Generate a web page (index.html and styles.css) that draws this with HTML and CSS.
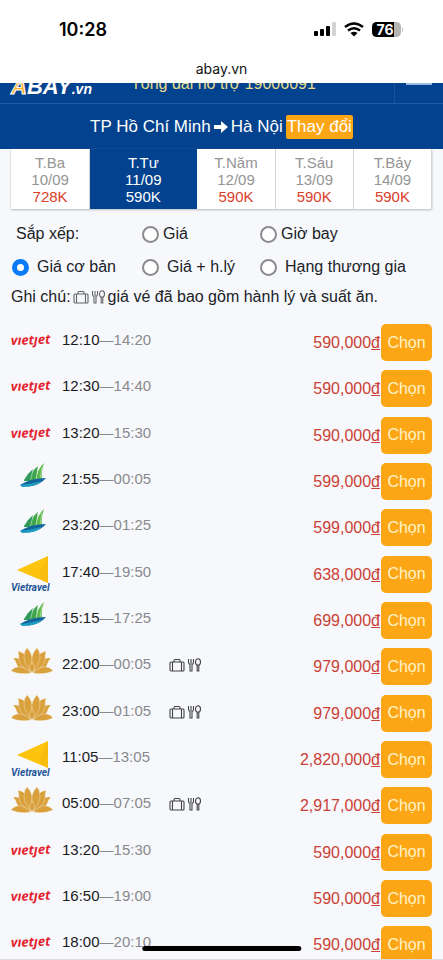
FILE: index.html
```html
<!DOCTYPE html>
<html lang="vi">
<head>
<meta charset="utf-8">
<meta name="viewport" content="width=device-width, initial-scale=1">
<title>abay.vn</title>
<link rel="stylesheet" href="styles.css">
</head>
<body>
<svg class="defs" aria-hidden="true">
  <symbol id="vietjet" viewBox="0 0 42 26" overflow="visible">
    <text class="vj" x="0" y="21" transform="rotate(-2 0 21)">vıetȷet</text>
  </symbol>
  <symbol id="bamboo" viewBox="0 0 42 26">
    <path d="M13 17Q17 10 22 6L20 18H13Z" fill="#2f9a57"/>
    <path d="M19 18Q20 8 27 3L25 18Z" fill="#3fa54c"/>
    <path d="M25 18Q26 6 33 0Q30 8 31 17Z" fill="#5cb848"/>
    <path d="M19.500 17L22 7M25 17L27 4M29 16L31 4" stroke="#e4f3e4" stroke-width=".5"/>
    <path d="M9 22Q20 15 35 15Q30 21 21 23Q13 24 9 22Z" fill="#12649c"/>
    <path d="M9 22Q19 21 31 18Q25 24 11 24Z" fill="#1f9dc0"/>
  </symbol>
  <symbol id="vietravel" viewBox="0 0 42 37" overflow="visible">
    <path d="M6 14L37 0V27Z" fill="#fcc40d"/>
    <path d="M29 16L37 0V27L29 22Z" fill="#f7bc0c"/>
    <text class="vt" x="0" y="35">Vietravel</text>
  </symbol>
  <symbol id="lotus" viewBox="0 0 42 26">
    <g fill="#d9a03c" stroke="#f8efdc" stroke-width=".4">
      <path d="M2 10Q12 9 17 17L20 25Q8 23 6 17Q5 13 2 10Z"/>
      <path d="M40 10Q30 9 25 17L22 25Q34 23 36 17Q37 13 40 10Z"/>
      <path d="M7 3Q17 6 19 14L20 24Q9 19 8 12Q8 7 7 3Z"/>
      <path d="M35 3Q25 6 23 14L22 24Q33 19 34 12Q34 7 35 3Z"/>
      <path d="M16 0Q22 6 21 13L20 23Q13 16 13 9Q13 3 16 0Z"/>
      <path d="M26 0Q20 6 21 13L22 23Q29 16 29 9Q29 3 26 0Z"/>
      <path d="M0 23Q4 18 11 19Q16 21 20 25Q8 27 0 23Z"/>
      <path d="M42 23Q38 18 31 19Q26 21 22 25Q34 27 42 23Z"/>
      <path d="M21 14Q26 20 21 25Q16 20 21 14Z"/>
    </g>
  </symbol>
  <symbol id="extras" viewBox="0 0 33 14">
    <g fill="none" stroke="currentColor" stroke-width="1.1">
      <rect x="1" y="4" width="14" height="9" rx="1"/>
      <path d="M5 4V2.500Q5 1.500 6 1.500H10Q11 1.500 11 2.500V4M3.500 4V13M12.500 4V13"/>
      <path d="M19.500 1V4Q19.500 6 21 6.500V13H23V6.500Q24.500 6 24.500 4V1M22 1V6"/>
      <ellipse cx="29" cy="4" rx="2.500" ry="3.200"/>
      <path d="M28.200 7V13H29.800V7"/>
    </g>
  </symbol>
</svg>

<div class="screen">
  <header class="status">
    <span class="clock">10:28</span>
    <svg class="signals" width="90" height="18" viewBox="0 0 90 18" role="img" aria-label="Pin 76%">
      <rect x="1" y="10" width="4" height="5" rx="1"/>
      <rect x="7" y="8" width="4" height="7" rx="1"/>
      <rect x="13" y="5" width="4" height="10" rx="1"/>
      <rect x="19" y="1" width="4" height="14" rx="1" fill="#d3d3d3"/>
      <g fill="none" stroke="#000" stroke-width="2.600">
        <path d="M32 6Q41 -1 50 6"/>
        <path d="M35 9.500Q41 5 47 9.500"/>
      </g>
      <path d="M37.500 12Q41 9.500 44.500 12L41 15.500Z"/>
      <path d="M64 1H82V16H64Q59 16 59 11V6Q59 1 64 1Z"/>
      <path d="M81 1H83Q88 1 88 6V11Q88 16 83 16H81Z" fill="#b5b5b5"/>
      <path d="M89 6Q91 8.500 89 11Z" fill="#b5b5b5"/>
      <text class="battery" x="72" y="14" text-anchor="middle">76</text>
    </svg>
  </header>
  <div class="address">abay.vn</div>

  <div class="topbar">
    <a class="brand" href="#"><span class="brand-a">A</span>BAY<small>.vn</small></a>
    <a class="hotline" href="#">Tổng đài hỗ trợ 19006091</a>
    <button class="menu" type="button" aria-label="Menu"><span></span></button>
  </div>

  <div class="route">
    <span>TP Hồ Chí Minh</span>
    <svg width="14" height="12" viewBox="0 0 14 12" aria-hidden="true"><path d="M0 4H7V0L14 6L7 12V8H0Z" fill="#fff"/></svg>
    <span>Hà Nội</span>
    <a class="change" href="#">Thay đổi</a>
  </div>

  <nav class="days">
    <a href="#">T.Ba<br>10/09<b>728K</b></a>
    <a class="active" href="#">T.Tư<br>11/09<b>590K</b></a>
    <a href="#">T.Năm<br>12/09<b>590K</b></a>
    <a href="#">T.Sáu<br>13/09<b>590K</b></a>
    <a href="#">T.Bảy<br>14/09<b>590K</b></a>
  </nav>

  <form class="options">
    <span class="caption">Sắp xếp:</span>
    <label class="tight"><input type="radio" name="sort">Giá</label>
    <label class="tight"><input type="radio" name="sort">Giờ bay</label>
    <label><input type="radio" name="fare" checked>Giá cơ bản</label>
    <label><input type="radio" name="fare">Giá + h.lý</label>
    <label><input type="radio" name="fare">Hạng thương gia</label>
  </form>
  <p class="note"><span>Ghi chú:</span><svg width="33" height="14"><use href="#extras"/></svg><span>giá vé đã bao gồm hành lý và suất ăn.</span></p>

  <table class="flights">
    <colgroup><col class="c-logo"><col class="c-time"><col class="c-extra"><col><col class="c-pick"></colgroup>
    <tbody>
      <tr><td><svg class="logo" role="img" aria-label="Vietjet"><use href="#vietjet"/></svg></td><td class="time">12:10<i>—</i><span>14:20</span></td><td></td><td class="price">590,000<u>đ</u></td><td><button type="button">Chọn</button></td></tr>
      <tr><td><svg class="logo" role="img" aria-label="Vietjet"><use href="#vietjet"/></svg></td><td class="time">12:30<i>—</i><span>14:40</span></td><td></td><td class="price">590,000<u>đ</u></td><td><button type="button">Chọn</button></td></tr>
      <tr><td><svg class="logo" role="img" aria-label="Vietjet"><use href="#vietjet"/></svg></td><td class="time">13:20<i>—</i><span>15:30</span></td><td></td><td class="price">590,000<u>đ</u></td><td><button type="button">Chọn</button></td></tr>
      <tr><td><svg class="logo" role="img" aria-label="Bamboo"><use href="#bamboo"/></svg></td><td class="time">21:55<i>—</i><span>00:05</span></td><td></td><td class="price">599,000<u>đ</u></td><td><button type="button">Chọn</button></td></tr>
      <tr><td><svg class="logo" role="img" aria-label="Bamboo"><use href="#bamboo"/></svg></td><td class="time">23:20<i>—</i><span>01:25</span></td><td></td><td class="price">599,000<u>đ</u></td><td><button type="button">Chọn</button></td></tr>
      <tr><td><svg class="logo tall" role="img" aria-label="Vietravel"><use href="#vietravel"/></svg></td><td class="time">17:40<i>—</i><span>19:50</span></td><td></td><td class="price">638,000<u>đ</u></td><td><button type="button">Chọn</button></td></tr>
      <tr><td><svg class="logo" role="img" aria-label="Bamboo"><use href="#bamboo"/></svg></td><td class="time">15:15<i>—</i><span>17:25</span></td><td></td><td class="price">699,000<u>đ</u></td><td><button type="button">Chọn</button></td></tr>
      <tr><td><svg class="logo" role="img" aria-label="Vietnam Airlines"><use href="#lotus"/></svg></td><td class="time">22:00<i>—</i><span>00:05</span></td><td class="extra"><svg width="33" height="14"><use href="#extras"/></svg></td><td class="price">979,000<u>đ</u></td><td><button type="button">Chọn</button></td></tr>
      <tr><td><svg class="logo" role="img" aria-label="Vietnam Airlines"><use href="#lotus"/></svg></td><td class="time">23:00<i>—</i><span>01:05</span></td><td class="extra"><svg width="33" height="14"><use href="#extras"/></svg></td><td class="price">979,000<u>đ</u></td><td><button type="button">Chọn</button></td></tr>
      <tr><td><svg class="logo tall" role="img" aria-label="Vietravel"><use href="#vietravel"/></svg></td><td class="time">11:05<i>—</i><span>13:05</span></td><td></td><td class="price">2,820,000<u>đ</u></td><td><button type="button">Chọn</button></td></tr>
      <tr><td><svg class="logo" role="img" aria-label="Vietnam Airlines"><use href="#lotus"/></svg></td><td class="time">05:00<i>—</i><span>07:05</span></td><td class="extra"><svg width="33" height="14"><use href="#extras"/></svg></td><td class="price">2,917,000<u>đ</u></td><td><button type="button">Chọn</button></td></tr>
      <tr><td><svg class="logo" role="img" aria-label="Vietjet"><use href="#vietjet"/></svg></td><td class="time">13:20<i>—</i><span>15:30</span></td><td></td><td class="price">590,000<u>đ</u></td><td><button type="button">Chọn</button></td></tr>
      <tr><td><svg class="logo" role="img" aria-label="Vietjet"><use href="#vietjet"/></svg></td><td class="time">16:50<i>—</i><span>19:00</span></td><td></td><td class="price">590,000<u>đ</u></td><td><button type="button">Chọn</button></td></tr>
      <tr><td><svg class="logo" role="img" aria-label="Vietjet"><use href="#vietjet"/></svg></td><td class="time">18:00<i>—</i><span>20:10</span></td><td></td><td class="price">590,000<u>đ</u></td><td><button type="button">Chọn</button></td></tr>
    </tbody>
  </table>
  <div class="home-bar"></div>
</div>
</body>
</html>
```
FILE: styles.css
```css
* { box-sizing: border-box; }

body {
  margin: 0;
  background: #f6f8fc;
  color: #202226;
  font: 16px/18px "Liberation Sans", Arial, sans-serif;
}

a { color: inherit; text-decoration: none; }

.defs { position: absolute; width: 0; height: 0; }

.screen {
  position: relative;
  height: 100vh;
  overflow: hidden;
  border-bottom: 1px solid #dcd9df;
}

/* Phone status area */
.status {
  display: flex;
  justify-content: space-between;
  align-items: center;
  height: 60px;
  padding: 0 40px 0 59px;
  background: #fff;
}

.clock { font: 600 18px/20px Inter, sans-serif; color: #000; }
.signals { overflow: visible; }
.battery { font: 700 14px Inter, sans-serif; fill: #fff; }

.address {
  height: 23px;
  background: #fff;
  color: #111;
  font: 14px/18px Inter, sans-serif;
  text-align: center;
}

/* Site header, scrolled under the address bar */
.topbar {
  display: flex;
  align-items: flex-end;
  height: 21px;
  padding: 0 11px;
  overflow: hidden;
  background: #03428e;
  border-bottom: 1px solid #2259a0;
}

.brand {
  width: 120px;
  padding-bottom: 4px;
  color: #fff;
  font: italic 700 22px/20px "Liberation Sans", sans-serif;
}
.brand small { font-size: 14px; }
.brand-a { color: #fdb02c; -webkit-text-stroke: 1px #fff; }

.hotline { flex: 1; padding-bottom: 10px; color: #e6dc8c; white-space: nowrap; }

.menu {
  align-self: stretch;
  display: flex;
  align-items: flex-start;
  padding: 0 0 0 11px;
  border: 0;
  border-left: 1px solid #1c509a;
  background: none;
}
.menu span { width: 26px; height: 2px; background: #9db9dd; }

.route {
  display: flex;
  justify-content: center;
  align-items: center;
  gap: 3px;
  height: 45px;
  background: #03428e;
  color: #fff;
  font-size: 17px;
}

.change {
  padding: 3px 1px;
  border-radius: 2px;
  background: #fca616;
}

/* Day tabs */
.days {
  display: grid;
  grid-template-columns: 79fr 107fr 78fr 78fr 78fr;
  margin: 0 11px;
  background: #fff;
  box-shadow: 0 1px 2px #bbb;
}
.days a {
  padding: 5px 0 4px;
  border-right: 1px solid #d5d5d8;
  color: #949494;
  font-size: 15px;
  line-height: 17px;
  text-align: center;
}
.days b { display: block; color: #d9402c; font-weight: 400; }
.days .active, .days .active b { border-color: #03428e; background: #03428e; color: #fff; }

/* Sort and fare options */
.options {
  display: grid;
  grid-template-columns: 130px 118px 1fr;
  row-gap: 15px;
  padding: 16px 12px 0;
}
.caption { padding-left: 4px; }
.options label { display: flex; align-items: center; gap: 8px; white-space: nowrap; }
.options .tight { gap: 4px; }
.options input {
  appearance: none;
  flex: none;
  width: 17px;
  height: 17px;
  margin: 0;
  border: 2px solid #8b8b8e;
  border-radius: 50%;
  background: #fff;
}
.options input:checked { border: 5px solid #0a7bf5; }

.note {
  display: flex;
  align-items: center;
  gap: 2px;
  margin: 12px 11px 13px;
  white-space: nowrap;
}
.note svg { flex: none; color: #666; }

/* Flights */
.flights {
  width: calc(100% - 22px);
  height: 649px;
  margin: 0 11px;
  border-collapse: collapse;
  table-layout: fixed;
}
.c-logo { width: 51px; }
.c-time { width: 107px; }
.c-extra { width: 50px; }
.c-pick { width: 51px; }

.flights td { padding: 5px 0 0; vertical-align: top; }
.logo { display: block; width: 42px; height: 26px; overflow: visible; }
.logo.tall { height: 37px; }
.vj { font: italic 700 13px "Open Sans", sans-serif; fill: #e5232f; }
.vt { font: italic 700 10px Roboto, sans-serif; fill: #1d5597; }

.flights .time { padding-top: 12px; color: #1b1b1d; font-size: 15px; }
.time i { color: #8a8a8d; font-size: 14px; font-style: normal; }
.time span { color: #8a8a8d; }
.flights .extra { padding-top: 15px; color: #444; }
.extra svg { display: block; }
.flights .price { padding: 15px 1px 0 0; color: #cb4135; text-align: right; }
.price u { text-decoration-thickness: 1px; text-underline-offset: 1px; }

.flights button {
  display: block;
  width: 100%;
  height: 37px;
  padding: 0;
  border: 0;
  border-radius: 5px;
  background: #fca616;
  color: #fff3c8;
  font: inherit;
}

.home-bar {
  position: absolute;
  bottom: 8px;
  left: 50%;
  width: 36%;
  height: 5px;
  border-radius: 3px;
  background: #000;
  transform: translateX(-50%);
}
```
